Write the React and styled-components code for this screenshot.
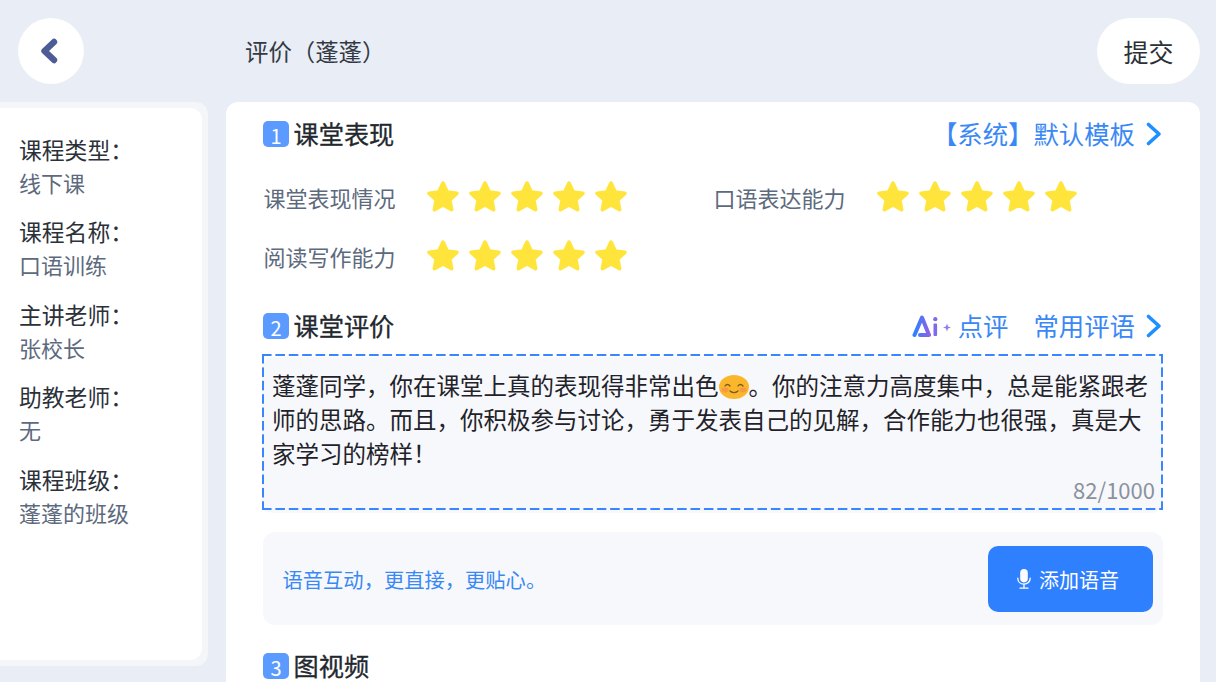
import React from 'react';
import styled, { createGlobalStyle } from 'styled-components';

const courseInfo = [
  { label: '课程类型：', value: '线下课' },
  { label: '课程名称：', value: '口语训练' },
  { label: '主讲老师：', value: '张校长' },
  { label: '助教老师：', value: '无' },
  { label: '课程班级：', value: '蓬蓬的班级' },
];

const Star = () => (
  <StarIcon viewBox="3 2.8 26 26">
    <path d="M16 4.5l3.4 7.3 7.9 1-5.8 5.4 1.5 7.9-7-3.9-7 3.9 1.5-7.9-5.8-5.4 7.9-1z" />
  </StarIcon>
);

const Rating = ({ label }) => (
  <RatingItem>
    <RatingLabel>{label}</RatingLabel>
    <Stars>
      {[0, 1, 2, 3, 4].map((i) => (
        <Star key={i} />
      ))}
    </Stars>
  </RatingItem>
);

const Chevron = () => (
  <ChevronIcon viewBox="0 0 18 26">
    <path d="M3.5 3.5L14 13 3.5 22.5" />
  </ChevronIcon>
);

const Smile = () => (
  <SmileIcon viewBox="0 0 30 24">
    <ellipse cx="15" cy="12" rx="15" ry="12" fill="#fbb72c" />
    <ellipse cx="6" cy="15" rx="3.6" ry="2.4" fill="#f59a45" />
    <ellipse cx="24" cy="15" rx="3.6" ry="2.4" fill="#f59a45" />
    <path d="M6 11c1.4-2 3.4-2 5 0M19 11c1.4-2 3.4-2 5 0M11 16c2.4 2 5.6 2 8 0" fill="none" stroke="#7a5a20" strokeWidth="1.3" strokeLinecap="round" />
  </SmileIcon>
);

const AiLogo = () => (
  <LogoIcon viewBox="0 0 40 24">
    <defs>
      <linearGradient id="aiGrad" x1="0" y1="0" x2="1" y2="0">
        <stop offset="0" stopColor="#2f80ff" />
        <stop offset="1" stopColor="#8a63e8" />
      </linearGradient>
    </defs>
    <path d="M2.5 21L10 3.5l7 17.5H8" fill="none" stroke="url(#aiGrad)" strokeWidth="4" strokeLinejoin="round" strokeLinecap="round" />
    <rect x="21.5" y="9.5" width="3.6" height="12.5" rx="1" fill="#7d6bea" />
    <circle cx="23.3" cy="5.2" r="2.1" fill="#7d6bea" />
    <path d="M35 9.5l1.1 2.9 2.9 1.1-2.9 1.1-1.1 2.9-1.1-2.9-2.9-1.1 2.9-1.1z" fill="#8f80ea" />
  </LogoIcon>
);

const MicIcon = () => (
  <svg width="14" height="20" viewBox="0 0 14 20">
    <rect x="3.2" y="0" width="7.6" height="13.4" rx="3.8" fill="#fff" />
    <path d="M0.8 9.2c0 3.6 2.7 6 6.2 6s6.2-2.4 6.2-6M7 15.2v3.6M3 19.2h8" fill="none" stroke="#fff" strokeWidth="1.3" strokeLinecap="round" />
  </svg>
);

const App = () => (
  <Page>
    <GlobalStyle />
    <Header>
      <BackButton>
        <svg width="22" height="28" viewBox="0 0 22 28">
          <path d="M16 5L6.5 14l9.5 9" fill="none" stroke="#4e5c96" strokeWidth="6.4" strokeLinecap="round" strokeLinejoin="round" />
        </svg>
      </BackButton>
      <Title>评价（蓬蓬）</Title>
      <SubmitButton>提交</SubmitButton>
    </Header>
    <Body>
      <Sidebar>
        <SidebarInner>
          {courseInfo.map((item) => (
            <InfoItem key={item.label}>
              <InfoLabel>{item.label}</InfoLabel>
              <InfoValue>{item.value}</InfoValue>
            </InfoItem>
          ))}
        </SidebarInner>
      </Sidebar>
      <Main>
        <SectionHead>
          <Badge>1</Badge>
          <SectionTitle>课堂表现</SectionTitle>
          <HeadLinks>
            <LinkText>【系统】默认模板</LinkText>
            <Chevron />
          </HeadLinks>
        </SectionHead>
        <RatingGrid>
          <Rating label="课堂表现情况" />
          <Rating label="口语表达能力" />
          <Rating label="阅读写作能力" />
        </RatingGrid>
        <SectionHead $top={41}>
          <Badge>2</Badge>
          <SectionTitle>课堂评价</SectionTitle>
          <HeadLinks>
            <AiLogo />
            <LinkText>点评</LinkText>
            <CommonLink>常用评语</CommonLink>
            <Chevron />
          </HeadLinks>
        </SectionHead>
        <CommentBox>
          <CommentText>
            蓬蓬同学，你在课堂上真的表现得非常出色<Smile />。你的注意力高度集中，总是能紧跟老师的思路。而且，你积极参与讨论，勇于发表自己的见解，合作能力也很强，真是大家学习的榜样！
          </CommentText>
          <Counter>82/1000</Counter>
        </CommentBox>
        <VoiceBar>
          <VoiceHint>语音互动，更直接，更贴心。</VoiceHint>
          <VoiceButton>
            <MicIcon />
            添加语音
          </VoiceButton>
        </VoiceBar>
        <SectionHead $top={28}>
          <Badge>3</Badge>
          <SectionTitle>图视频</SectionTitle>
        </SectionHead>
      </Main>
    </Body>
  </Page>
);

export default App;

const GlobalStyle = createGlobalStyle`
  html, body {
    margin: 0;
    padding: 0;
    background: #e9edf5;
  }
  * {
    box-sizing: border-box;
  }
`;

const Page = styled.div`
  width: 1216px;
  height: 682px;
  overflow: hidden;
  background: #e9edf5;
  font-family: 'Noto Sans CJK SC', 'Noto Sans', sans-serif;
  color: #23282f;
`;

const Header = styled.header`
  display: flex;
  align-items: center;
  height: 102px;
  padding: 0 16px 0 18px;
`;

const BackButton = styled.button`
  display: flex;
  align-items: center;
  justify-content: center;
  width: 66px;
  height: 66px;
  padding: 0 4px 0 0;
  border: 0;
  border-radius: 50%;
  background: #fff;
`;

const Title = styled.h1`
  margin: 0 0 0 161px;
  flex: 1;
  font-size: 23.4px;
  font-weight: 400;
  line-height: 32px;
  color: #333a44;
`;

const SubmitButton = styled.button`
  width: 103px;
  height: 66px;
  border: 0;
  border-radius: 33px;
  background: #fff;
  font-family: inherit;
  font-size: 25px;
  color: #2b3038;
`;

const Body = styled.div`
  display: flex;
  gap: 18px;
  align-items: flex-start;
  margin-left: -20px;
  padding-right: 16px;
`;

const Sidebar = styled.aside`
  flex: none;
  width: 228px;
  height: 564px;
  padding: 6px;
  border-radius: 12px;
  background: #f4f6fa;
`;

const SidebarInner = styled.div`
  height: 100%;
  padding: 24px 0 0 33px;
  border-radius: 12px;
  background: #fff;
`;

const InfoItem = styled.div`
  height: 82.4px;
`;

const InfoLabel = styled.div`
  padding-top: 1px;
  font-size: 22.8px;
  line-height: 33px;
  color: #2c3139;
`;

const InfoValue = styled.div`
  font-size: 22px;
  line-height: 32px;
  color: #5d6a7e;
`;

const Main = styled.main`
  flex: 1;
  height: 640px;
  padding: 19px 37px 0;
  border-radius: 12px;
  background: #fff;
`;

const SectionHead = styled.div`
  display: flex;
  align-items: center;
  height: 26px;
  margin-top: ${(p) => p.$top || 0}px;
`;

const Badge = styled.span`
  display: flex;
  align-items: center;
  justify-content: center;
  width: 26px;
  height: 26px;
  border-radius: 5px;
  background: #5b9bff;
  color: #fff;
  font-size: 20px;
  line-height: 26px;
  padding-top: 3px;
`;

const SectionTitle = styled.h2`
  margin: 0 0 2px 4.5px;
  font-size: 25.2px;
  font-weight: 400;
  line-height: 30px;
  color: #23282f;
  -webkit-text-stroke: 0.3px #23282f;
`;

const HeadLinks = styled.div`
  display: flex;
  align-items: center;
  margin-left: auto;
`;

const LinkText = styled.span`
  margin-bottom: 2px;
  font-size: 25.4px;
  line-height: 30px;
  color: #3a88f5;
`;

const CommonLink = styled(LinkText)`
  margin-left: 25px;
`;

const ChevronIcon = styled.svg`
  width: 18px;
  height: 26px;
  margin-left: 10px;
  fill: none;
  stroke: #1e8fff;
  stroke-width: 3.6;
  stroke-linecap: round;
  stroke-linejoin: round;
`;

const LogoIcon = styled.svg`
  width: 40px;
  height: 24px;
  margin-right: 6px;
`;

const RatingGrid = styled.div`
  display: grid;
  grid-template-columns: 450px 1fr;
  row-gap: 27px;
  margin-top: 34px;
`;

const RatingItem = styled.div`
  display: flex;
  align-items: center;
  height: 32px;
`;

const RatingLabel = styled.span`
  width: 164px;
  margin-top: -1px;
  padding-left: 0.5px;
  font-size: 22px;
  line-height: 32px;
  color: #5d6a7e;
`;

const Stars = styled.div`
  display: flex;
  gap: 10px;
`;

const StarIcon = styled.svg`
  display: block;
  width: 32px;
  height: 32px;
  fill: #ffe53b;
  stroke: #ffe53b;
  stroke-width: 3;
  stroke-linejoin: round;
`;

const CommentBox = styled.div`
  position: relative;
  height: 156px;
  margin: 18px 0 0 -1px;
  padding: 11px 9px 0 10px;
  border-radius: 12px;
  background: #f7f8fc;

  &::after {
    content: '';
    position: absolute;
    inset: -3px 0 3px 0;
    pointer-events: none;
    background-image:
      linear-gradient(90deg, #3a86ff 9.5px, transparent 9.5px),
      linear-gradient(90deg, #3a86ff 9.5px, transparent 9.5px),
      linear-gradient(180deg, #3a86ff 9.5px, transparent 9.5px),
      linear-gradient(180deg, #3a86ff 9.5px, transparent 9.5px);
    background-size: 13.4px 2px, 13.4px 2px, 2px 13.4px, 2px 13.4px;
    background-position: 0 0, 0 100%, 0 0, 100% 0;
    background-repeat: repeat-x, repeat-x, repeat-y, repeat-y;
  }
`;

const CommentText = styled.p`
  margin: 0;
  font-size: 23.5px;
  line-height: 34px;
  color: #1f2329;
`;

const SmileIcon = styled.svg`
  display: inline-block;
  width: 30px;
  height: 24px;
  margin: 0 0 -4px 0;
`;

const Counter = styled.span`
  position: absolute;
  right: 8px;
  bottom: 8px;
  font-size: 22px;
  line-height: 32px;
  color: #8a929c;
`;

const VoiceBar = styled.div`
  display: flex;
  align-items: center;
  justify-content: space-between;
  height: 93px;
  margin-top: 19px;
  padding: 0 10px 0 19.5px;
  border-radius: 12px;
  background: #f7f8fc;
`;

const VoiceHint = styled.span`
  margin-top: 1px;
  font-size: 20.3px;
  line-height: 28px;
  color: #3a88f5;
`;

const VoiceButton = styled.button`
  display: flex;
  align-items: center;
  justify-content: center;
  gap: 8px;
  width: 165px;
  height: 66px;
  padding: 1px 5px 0 0;
  border: 0;
  border-radius: 10px;
  background: #2f80ff;
  color: #fff;
  font-family: inherit;
  font-size: 20px;
`;
